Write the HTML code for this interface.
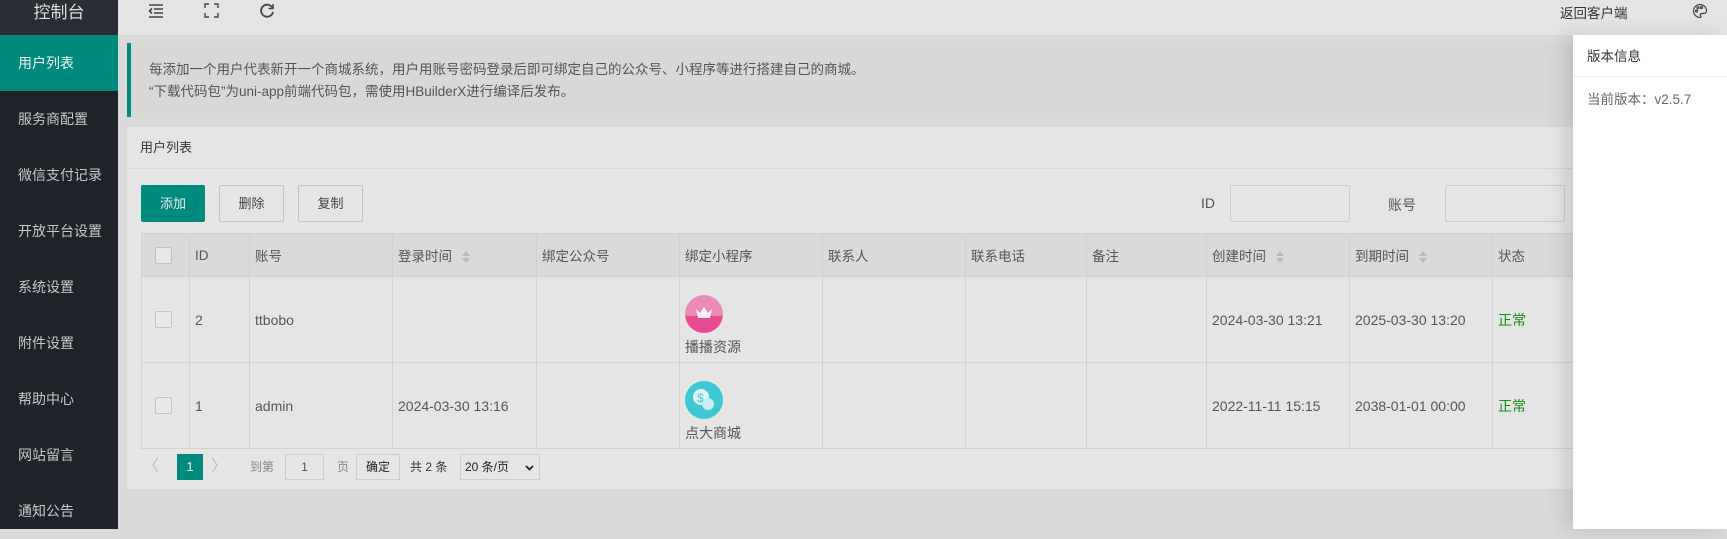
<!DOCTYPE html>
<html><head><meta charset="utf-8"><style>
*{margin:0;padding:0;box-sizing:border-box}
body{width:1727px;height:529px;overflow:hidden;background:#dadada;font-family:"Liberation Sans","Noto Sans CJK SC",sans-serif;font-size:14px;color:#555;position:relative}
.abs{position:absolute}
.side{left:0;top:0;width:118px;height:529px;background:#20222a}
.logo{left:0;top:0;width:118px;height:35px;background:#2b2d35;color:#ddd;font-size:17px;text-align:center;line-height:26px}
.nav{left:0;width:118px;height:56px;line-height:56px;padding-left:18px;color:#c8c8c8;font-size:14px}
.nav.on{background:#008a7d;color:#f0f0f0}
.top{left:118px;top:0;width:1609px;height:35px;background:#e4e4e4}
.notice{left:127px;top:43px;width:1600px;height:74px;background:#d8d8d8;border-left:4px solid #008a7d;padding:16px 0 0 18px;font-size:13.5px;line-height:22px;color:#555}
.card{left:127px;top:127px;width:1600px;height:362px;background:#e5e5e5}
.ch{left:0;top:0;width:100%;height:42px;border-bottom:1px solid #d6d6d6;line-height:42px;padding-left:13px;font-size:13px;color:#333}
.btn{top:58px;height:37px;border:1px solid #c4c4c4;line-height:35px;text-align:center;font-size:13px;color:#444;border-radius:2px}
.inp{top:58px;height:37px;border:1px solid #ccc;border-radius:2px;background:#e5e5e5}
table{position:absolute;left:14px;top:106px;border-collapse:collapse;font-size:14px;color:#555}
td,th{border:1px solid #d2d2d2;padding:0 0 0 5px;text-align:left;font-weight:normal}
th{height:43px;background:#dadada;font-size:13.5px}
td{height:86px}
.cb{display:inline-block;width:17px;height:17px;border:1px solid #c4c4c4;border-radius:2px;background:#e8e8e8;margin-left:8px;vertical-align:middle}
.sort{display:inline-block;margin-left:10px;vertical-align:middle;width:0;position:relative}
.sort:before{content:"";position:absolute;left:0;top:-6px;border:4px solid transparent;border-bottom:5px solid #bbb;border-top:0}
.sort:after{content:"";position:absolute;left:0;top:1px;border:4px solid transparent;border-top:5px solid #bbb;border-bottom:0}
.ok{color:#1a8a1a}
.ic{width:38px;height:38px;border-radius:50%;margin:0 0 4px 0}
.panel{left:1573px;top:35px;width:154px;height:494px;background:#fff;box-shadow:-8px 0 18px rgba(0,0,0,.12)}
.pg{top:327px}
</style></head><body>
<div class="abs side"></div>
<div class="abs logo">控制台</div>
<div class="abs nav on" style="top:35px">用户列表</div>
<div class="abs nav" style="top:91px">服务商配置</div>
<div class="abs nav" style="top:147px">微信支付记录</div>
<div class="abs nav" style="top:203px">开放平台设置</div>
<div class="abs nav" style="top:259px">系统设置</div>
<div class="abs nav" style="top:315px">附件设置</div>
<div class="abs nav" style="top:371px">帮助中心</div>
<div class="abs nav" style="top:427px">网站留言</div>
<div class="abs nav" style="top:483px">通知公告</div>
<div class="abs top"></div>
<svg class="abs" style="left:148px;top:3px" width="16" height="16" viewBox="0 0 16 16" fill="none" stroke="#444" stroke-width="1.6"><path d="M1 2h14M6 6h9M6 10h9M1 14h14M4 5.5L1.5 8 4 10.5"/></svg>
<svg class="abs" style="left:204px;top:3px" width="15" height="15" viewBox="0 0 15 15" fill="none" stroke="#444" stroke-width="1.4"><path d="M1 5V1h4M10 1h4v4M14 10v4h-4M5 14H1v-4"/></svg>
<svg class="abs" style="left:260px;top:3px" width="15" height="15" viewBox="0 0 15 15" fill="none" stroke="#444" stroke-width="1.8"><path d="M12.5 5A6 6 0 1 0 13 9"/><path d="M13 1v4.5H8.5" stroke-width="1.5"/></svg>
<div class="abs" style="left:1560px;top:2px;font-size:13.5px;color:#333">返回客户端</div>
<svg class="abs" style="left:1692px;top:3px" width="16" height="16" viewBox="0 0 16 16" fill="none" stroke="#444" stroke-width="1.2"><path d="M8 1.5A6.5 6.5 0 1 0 8 14.5c1.3 0 1.2-1.4.5-2-.7-.8 0-2 1.2-2H12a2.5 2.5 0 0 0 2.5-2.7C14.3 4 11.5 1.5 8 1.5z"/><circle cx="4.5" cy="8" r="1"/><circle cx="6" cy="4.8" r="1"/><circle cx="9.5" cy="4.5" r="1"/></svg>
<div class="abs notice">每添加一个用户代表新开一个商城系统，用户用账号密码登录后即可绑定自己的公众号、小程序等进行搭建自己的商城。<br>“下载代码包”为uni-app前端代码包，需使用HBuilderX进行编译后发布。</div>
<div class="abs card">
<div class="abs ch">用户列表</div>
<div class="abs btn" style="left:14px;width:64px;background:#008a7d;border-color:#008a7d;color:#eee">添加</div>
<div class="abs btn" style="left:92px;width:65px">删除</div>
<div class="abs btn" style="left:171px;width:65px">复制</div>
<div class="abs" style="left:1074px;top:68px;color:#555">ID</div>
<div class="abs inp" style="left:1103px;width:120px"></div>
<div class="abs" style="left:1261px;top:68px;color:#555">账号</div>
<div class="abs inp" style="left:1318px;width:120px"></div>
<table>
<tr><th style="width:48px"><span class="cb"></span></th><th style="width:60px">ID</th><th style="width:143px">账号</th><th style="width:144px">登录时间<span class="sort"></span></th><th style="width:143px">绑定公众号</th><th style="width:143px">绑定小程序</th><th style="width:143px">联系人</th><th style="width:121px">联系电话</th><th style="width:120px">备注</th><th style="width:143px">创建时间<span class="sort"></span></th><th style="width:143px">到期时间<span class="sort"></span></th><th style="width:100px">状态</th></tr>
<tr><td><span class="cb"></span></td><td>2</td><td>ttbobo</td><td></td><td></td><td style="padding-top:12px"><div class="ic" style="background:linear-gradient(#eb8cb6 55%,#e84a94 55%)"><svg width="38" height="38" viewBox="0 0 38 38"><path d="M11 14l4 4 4-6 4 6 4-4-2 9H13z" fill="#fff" opacity=".9"/></svg></div>播播资源</td><td></td><td></td><td></td><td>2024-03-30 13:21</td><td>2025-03-30 13:20</td><td class="ok">正常</td></tr>
<tr><td><span class="cb"></span></td><td>1</td><td>admin</td><td>2024-03-30 13:16</td><td></td><td style="padding-top:12px"><div class="ic" style="background:#3ec8d4"><svg width="38" height="38" viewBox="0 0 38 38"><circle cx="16" cy="16" r="8" fill="#dff6f8"/><circle cx="23" cy="23" r="6" fill="#c8eef2"/><text x="12" y="21" font-size="12" fill="#3ec8d4" font-family="Liberation Sans">$</text></svg></div>点大商城</td><td></td><td></td><td></td><td>2022-11-11 15:15</td><td>2038-01-01 00:00</td><td class="ok">正常</td></tr>
</table>
<div class="abs pg" style="left:16px;line-height:26px;color:#bbb;font-size:16px">〈</div>
<div class="abs pg" style="left:50px;width:26px;height:26px;background:#008a7d;color:#eee;text-align:center;line-height:26px;font-size:13px">1</div>
<div class="abs pg" style="left:84px;line-height:26px;color:#bbb;font-size:16px">〉</div>
<div class="abs pg" style="left:123px;line-height:26px;font-size:12px;color:#888">到第</div>
<div class="abs pg" style="left:158px;width:39px;height:26px;border:1px solid #ccc;text-align:center;line-height:24px;font-size:12px">1</div>
<div class="abs pg" style="left:210px;line-height:26px;font-size:12px;color:#888">页</div>
<div class="abs pg" style="left:229px;width:44px;height:26px;border:1px solid #ccc;text-align:center;line-height:24px;font-size:12px;color:#222">确定</div>
<div class="abs pg" style="left:283px;line-height:26px;font-size:12px;color:#333">共 2 条</div>
<div class="abs pg" style="left:333px;width:80px;height:26px;border:1px solid #ccc;line-height:24px;font-size:12px;color:#222;padding-left:4px">20 条/页
<svg class="abs" style="left:64px;top:9px" width="9" height="8" viewBox="0 0 9 8"><path d="M1 2l3.5 3.5L8 2" stroke="#222" stroke-width="1.8" fill="none"/></svg></div>
</div>
<div class="abs panel">
<div style="height:42px;border-bottom:1px solid #eee;padding:10px 0 0 14px;font-size:13.5px;color:#333">版本信息</div>
<div style="padding:11px 0 0 14px;font-size:13.5px;color:#666">当前版本：v2.5.7</div>
</div>
</body></html>
